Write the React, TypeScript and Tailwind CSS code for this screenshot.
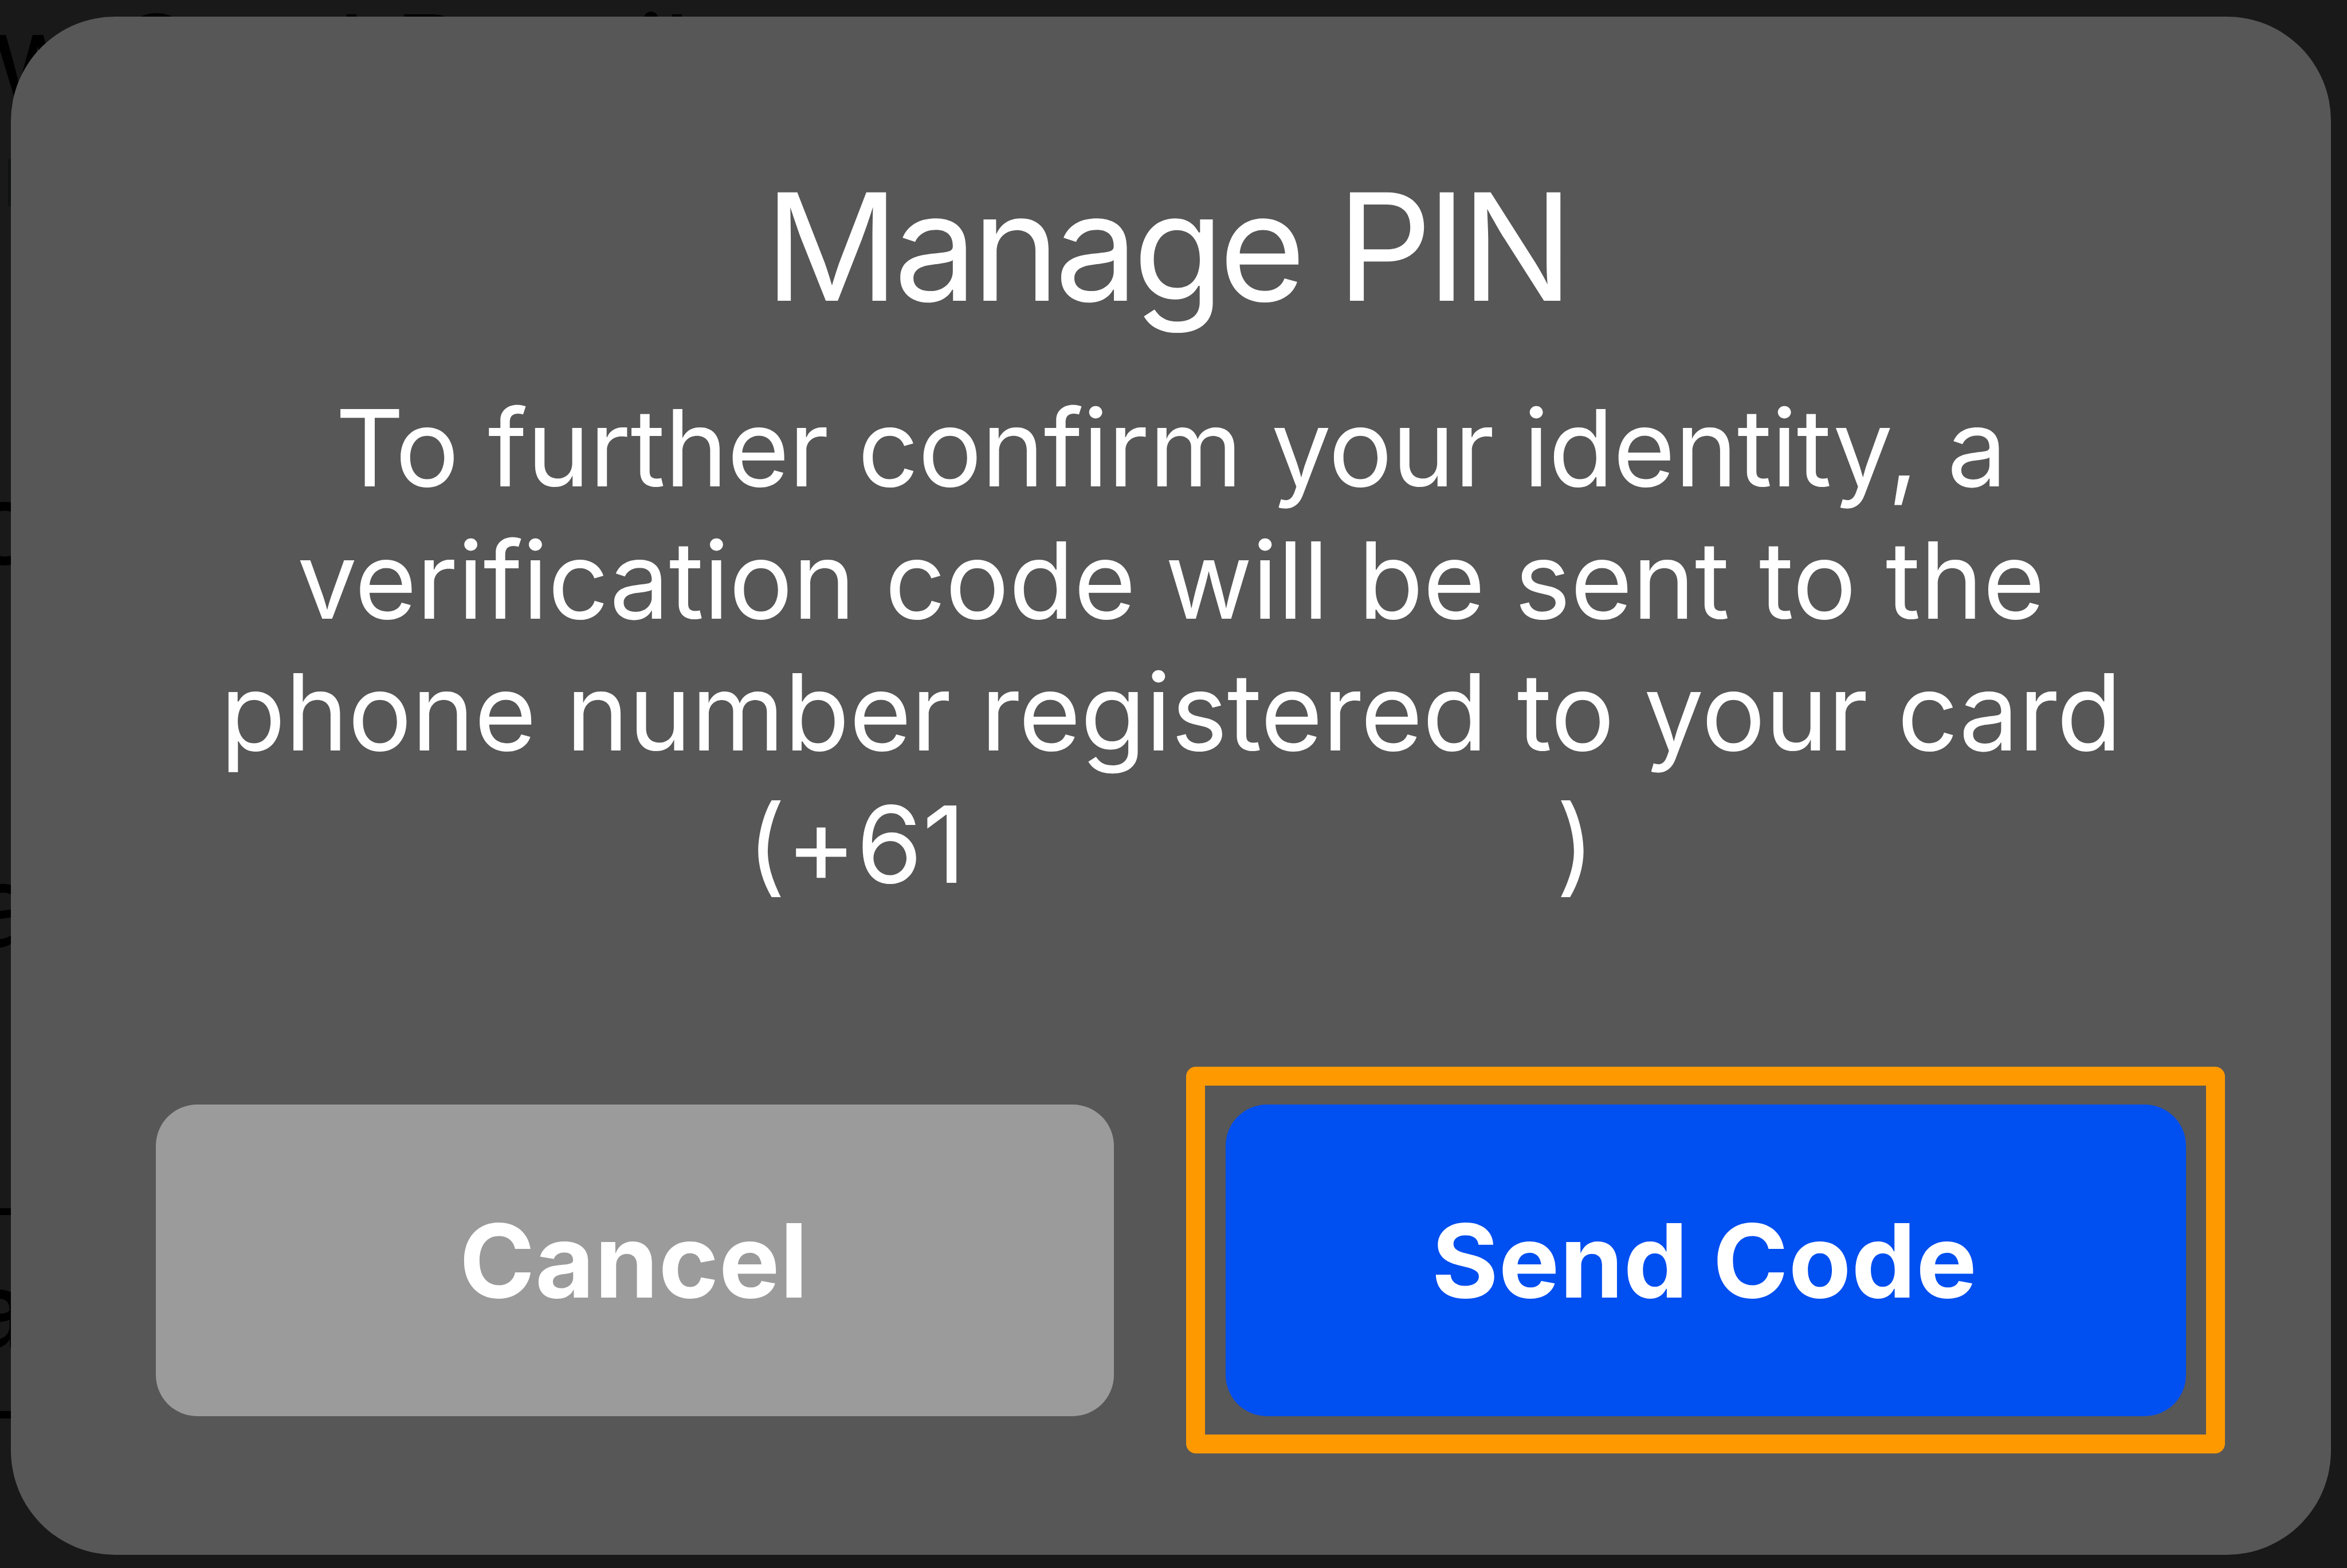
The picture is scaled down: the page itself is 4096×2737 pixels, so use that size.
export default function App() {
  return (
    <div className="relative h-[2737px] w-[4096px] overflow-hidden bg-[#191919] font-['Inter',sans-serif] text-white [font-feature-settings:'calt'_0]">
      {/* page content that shows around the edges of the dialog */}
      <div className="text-[198px] text-black">
        <div className="absolute -top-[13px] -left-[15px] whitespace-nowrap leading-[220px] tracking-[-2.7px]">w Card Details</div>
        <div className="absolute top-[278px] left-[14px] h-[82px] w-[8px] bg-[#0e1211]" />
        <div className="absolute top-[814px] -left-[51px] leading-none">o</div>
        <div className="absolute top-[1481px] -left-[50px] leading-none">a</div>
        <div className="absolute top-[2109px] left-0 h-[12px] w-[40px] bg-black" />
        <div className="absolute top-[2195px] -left-[54px] text-[182px] leading-none font-medium">a</div>
        <div className="absolute top-[2463px] left-0 h-[13px] w-[40px] bg-black" />
      </div>

      <div className="relative flex h-full w-full pt-[29px] pr-[28px] pb-[23px] pl-[19px]">
        <section className="flex w-full flex-col items-center rounded-[182px] bg-[#575757] pt-[245px]">
          <h1 className="whitespace-nowrap pr-[16px] text-[260px] leading-[314px] tracking-[-9.4px]">Manage PIN</h1>
          <p className="mt-[79px] flex flex-col items-center whitespace-nowrap text-[186px] leading-[230.5px]">
            <span className="tracking-[-1px]">To further confirm your identity, a</span>
            <span className="tracking-[-0.6px]">verification code will be sent to the</span>
            <span className="tracking-[-0.5px]">phone number registered to your card</span>
            <span className="flex gap-[1030px]">
              <span>(+61</span>
              <span>)</span>
            </span>
          </p>
          <div className="mt-[339px] flex w-full gap-[195px] px-[253px] text-[178px] font-bold tracking-[0.6px]">
            <button className="h-[544px] w-[1672px] rounded-[72px] bg-[#9b9b9b] pr-[4px]">Cancel</button>
            <button className="relative h-[544px] flex-1 rounded-[72px] bg-[#004ff0] pr-[5px]">
              Send Code
              {/* highlight ring */}
              <span className="absolute -top-[66px] -right-[68px] -bottom-[65px] -left-[69px] rounded-[17px] border-[33px] border-[#ff9900]" />
            </button>
          </div>
        </section>
      </div>
    </div>
  );
}
